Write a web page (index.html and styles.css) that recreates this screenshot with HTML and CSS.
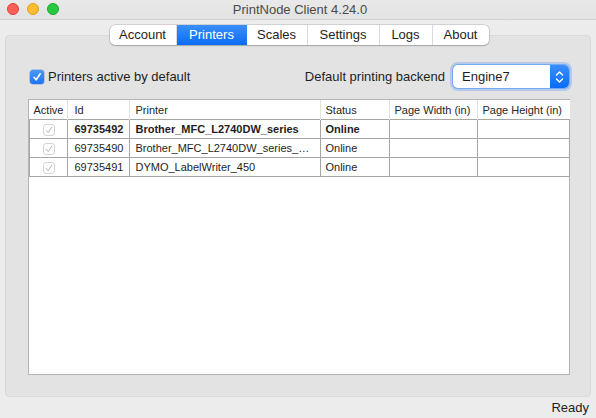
FILE: index.html
```html
<!DOCTYPE html>
<html>
<head>
<meta charset="utf-8">
<link rel="stylesheet" href="styles.css">
</head>
<body>
<div class="window">
  <div class="titlebar">
    <div class="lights">
      <span class="light red"></span>
      <span class="light yellow"></span>
      <span class="light green"></span>
    </div>
    <div class="title">PrintNode Client 4.24.0</div>
  </div>
  <div class="content">
    <div class="tabs">
      <div class="tab">Account</div>
      <div class="tab active">Printers</div>
      <div class="tab">Scales</div>
      <div class="tab">Settings</div>
      <div class="tab">Logs</div>
      <div class="tab last">About</div>
    </div>
    <div class="panel">
      <div class="toprow">
        <label class="check">
          <span class="box"><svg width="10" height="10" viewBox="0 0 10 10"><path d="M2 5.3 L4.2 7.8 L8.2 1.8" fill="none" stroke="#fff" stroke-width="1.6" stroke-linecap="round" stroke-linejoin="round"/></svg></span>
          <span>Printers active by default</span>
        </label>
        <div class="backend">
          <span>Default printing backend</span>
          <div class="select">
            <span class="value">Engine7</span>
            <span class="arrows"><svg width="9" height="14" viewBox="0 0 9 14"><path d="M1.5 5 L4.5 2 L7.5 5 M1.5 9 L4.5 12 L7.5 9" fill="none" stroke="#fff" stroke-width="1.4" stroke-linecap="round" stroke-linejoin="round"/></svg></span>
          </div>
        </div>
      </div>
      <div class="tablewrap">
        <table>
          <thead>
            <tr>
              <th class="c-active">Active</th>
              <th class="c-id">Id</th>
              <th class="c-printer">Printer</th>
              <th class="c-status">Status</th>
              <th class="c-w">Page Width (in)</th>
              <th class="c-h">Page Height (in)</th>
            </tr>
          </thead>
          <tbody>
            <tr class="bold">
              <td class="cb"><span class="mini"><svg width="10" height="10" viewBox="0 0 10 10"><path d="M2.2 5.4 L4.2 7.6 L7.8 2.2" fill="none" stroke="#b4b4b4" stroke-width="1" stroke-linecap="round" stroke-linejoin="round"/></svg></span></td>
              <td>69735492</td>
              <td>Brother_MFC_L2740DW_series</td>
              <td>Online</td>
              <td></td>
              <td></td>
            </tr>
            <tr>
              <td class="cb"><span class="mini"><svg width="10" height="10" viewBox="0 0 10 10"><path d="M2.2 5.4 L4.2 7.6 L7.8 2.2" fill="none" stroke="#b4b4b4" stroke-width="1" stroke-linecap="round" stroke-linejoin="round"/></svg></span></td>
              <td>69735490</td>
              <td>Brother_MFC_L2740DW_series_…</td>
              <td>Online</td>
              <td></td>
              <td></td>
            </tr>
            <tr>
              <td class="cb"><span class="mini"><svg width="10" height="10" viewBox="0 0 10 10"><path d="M2.2 5.4 L4.2 7.6 L7.8 2.2" fill="none" stroke="#b4b4b4" stroke-width="1" stroke-linecap="round" stroke-linejoin="round"/></svg></span></td>
              <td>69735491</td>
              <td>DYMO_LabelWriter_450</td>
              <td>Online</td>
              <td></td>
              <td></td>
            </tr>
          </tbody>
        </table>
      </div>
    </div>
  </div>
  <div class="statusbar">Ready</div>
</div>
</body>
</html>
```
FILE: styles.css
```css
html, body {
  margin: 0;
  padding: 0;
}
body {
  width: 596px;
  height: 418px;
  overflow: hidden;
  background: #ececec;
  font-family: "Liberation Sans", Arial, sans-serif;
  color: #1e1e1e;
}
.window {
  width: 596px;
  height: 418px;
  display: flex;
  flex-direction: column;
  background: #ececec;
}
.titlebar {
  height: 19px;
  border-bottom: 1px solid #d2d2d2;
  background: linear-gradient(#e9e9e9, #e2e2e2);
  display: grid;
  grid-template-columns: 1fr;
  align-items: center;
  position: relative;
}
.lights {
  position: absolute;
  left: 7px;
  top: 3px;
  display: flex;
  gap: 8px;
}
.light {
  width: 12px;
  height: 12px;
  border-radius: 50%;
  box-sizing: border-box;
}
.red { background: #fe5f57; border: 0.5px solid #e0443e; }
.yellow { background: #febc2e; border: 0.5px solid #dea123; }
.green { background: #28c840; border: 0.5px solid #1aab29; }
.title {
  text-align: center;
  font-size: 13px;
  color: #4a4a4a;
  padding-left: 4px;
}
.content {
  flex: 1;
  display: flex;
  flex-direction: column;
  padding: 5px 5px 0 5px;
  min-height: 0;
}
.tabs {
  align-self: center;
  display: flex;
  height: 20px;
  margin-left: 2px;
  margin-bottom: -10px;
  position: relative;
  z-index: 2;
  background: #fff;
  border-radius: 5px;
  box-shadow: 0 0 0 0.5px rgba(0,0,0,0.22), 0 1px 1.5px rgba(0,0,0,0.18);
  font-size: 13px;
}
.tab {
  display: flex;
  align-items: center;
  justify-content: center;
  border-right: 1px solid #dadada;
  color: #1e1e1e;
  line-height: 20px;
}
.tab:nth-child(1) { width: 66px; border-radius: 5px 0 0 5px; }
.tab:nth-child(2) { width: 70px; }
.tab:nth-child(3) { width: 60px; }
.tab:nth-child(4) { width: 71px; }
.tab:nth-child(5) { width: 52px; }
.tab:nth-child(6) { width: 56px; border-right: none; border-radius: 0 5px 5px 0; }
.tab.active {
  background: linear-gradient(#3a8ffa, #0a6cf5);
  color: #fff;
  border-right: none;
}
.panel {
  flex: 1;
  background: #e3e3e3;
  border: 1px solid #d9d9d9;
  border-radius: 4px;
  padding: 29px 20px 21px 22px;
  display: flex;
  flex-direction: column;
  min-height: 0;
}
.toprow {
  display: flex;
  align-items: center;
  justify-content: space-between;
  height: 23px;
  font-size: 13px;
}
.check {
  display: flex;
  align-items: center;
  gap: 4px;
  padding-left: 2px;
}
.box {
  width: 14px;
  height: 14px;
  border-radius: 3px;
  background: linear-gradient(#4a98fb, #1a74f5);
  display: flex;
  align-items: center;
  justify-content: center;
  box-shadow: 0 0 0 0.5px rgba(0,60,160,0.4);
}
.backend {
  display: flex;
  align-items: center;
  gap: 8px;
}
.select {
  width: 116px;
  height: 23px;
  box-sizing: border-box;
  background: #fff;
  border-radius: 5px;
  box-shadow: 0 0 0 1px rgba(70,140,250,0.55), 0 0 0 3px rgba(90,155,250,0.35);
  display: flex;
  align-items: center;
  justify-content: space-between;
  overflow: hidden;
  margin-right: 1px;
}
.value {
  padding-left: 9px;
  font-size: 13px;
}
.arrows {
  width: 19px;
  height: 23px;
  background: linear-gradient(#3a8ffa, #0a6cf5);
  display: flex;
  align-items: center;
  justify-content: center;
}
.tablewrap {
  flex: 1;
  margin-top: 11px;
  background: #fff;
  border: 1px solid #b4b4b4;
  min-height: 0;
}
table {
  border-collapse: collapse;
  font-size: 11px;
  width: 541px;
  table-layout: fixed;
}
th {
  font-weight: normal;
  text-align: left;
  height: 19px;
  padding: 0 0 0 5px;
  color: #262626;
  background: #fff;
}
th + th {
  border-left: 1px solid #e3e3e3;
}
.c-active { width: 33px; padding-left: 4px; }
.c-id { width: 54px; padding-left: 7px; }
.c-printer { width: 184px; padding-left: 6px; }
.c-status { width: 63px; }
.c-w { width: 82px; }
.c-h { width: 87px; }
td {
  height: 18px;
  padding: 0 0 0 5px;
  border: 1px solid #a6a6a6;
  white-space: nowrap;
  overflow: hidden;
  color: #1e1e1e;
}
td:nth-child(2) { padding-left: 7px; }
td:nth-child(3) { padding-left: 6px; }
tr.bold td { font-weight: bold; }
td.cb {
  padding: 0;
  text-align: center;
}
.mini {
  display: inline-flex;
  width: 12px;
  height: 12px;
  box-sizing: border-box;
  border: 1px solid #d4d4d4;
  border-radius: 3px;
  background: #fff;
  align-items: center;
  justify-content: center;
  vertical-align: middle;
  margin-left: 2px;
}
.statusbar {
  height: 21px;
  display: flex;
  align-items: center;
  justify-content: flex-end;
  padding-right: 7px;
  font-size: 13px;
  color: #1e1e1e;
}
```
